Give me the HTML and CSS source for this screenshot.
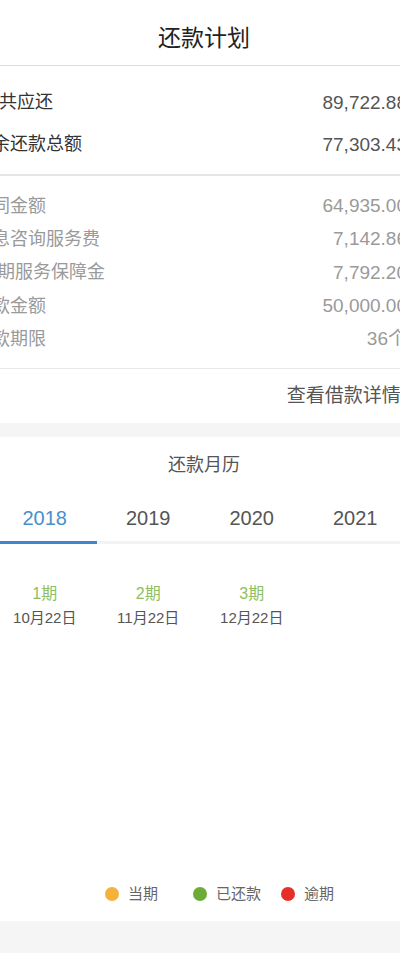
FILE: index.html
```html
<!DOCTYPE html>
<html lang="zh-CN">
<head>
    <meta charset="UTF-8">
    <meta name="viewport" content="width=device-width, initial-scale=1.0">
    <title>还款计划</title>
    <link rel="stylesheet" href="styles.css">
</head>
<body>
    <div class="page">
        <header class="nav">
            <h1>还款计划</h1>
        </header>

        <section class="summary">
            <div class="row shift"><span class="label">共应还</span><span class="value">89,722.88元</span></div>
            <div class="row"><span class="label">余还款总额</span><span class="value">77,303.43元</span></div>
        </section>

        <section class="detail">
            <div class="row"><span class="label">同金额</span><span class="value">64,935.00元</span></div>
            <div class="row"><span class="label">息咨询服务费</span><span class="value">7,142.86元</span></div>
            <div class="row shift-small"><span class="label">期服务保障金</span><span class="value">7,792.20元</span></div>
            <div class="row"><span class="label">款金额</span><span class="value">50,000.00元</span></div>
            <div class="row"><span class="label">款期限</span><span class="value">36个月</span></div>
        </section>

        <a class="more" href="#">查看借款详情<span class="arrow">&rsaquo;</span></a>

        <div class="gap"></div>

        <section class="calendar">
            <h2>还款月历</h2>
            <div class="tabs">
                <div class="tab active">2018</div>
                <div class="tab">2019</div>
                <div class="tab">2020</div>
                <div class="tab">2021</div>
            </div>
            <div class="periods">
                <div class="period"><span class="num">1期</span><span class="date">10月22日</span></div>
                <div class="period"><span class="num">2期</span><span class="date">11月22日</span></div>
                <div class="period"><span class="num">3期</span><span class="date">12月22日</span></div>
            </div>
            <div class="legend">
                <div class="legend-item"><span class="dot current"></span>当期</div>
                <div class="legend-item"><span class="dot paid"></span>已还款</div>
                <div class="legend-item"><span class="dot overdue"></span>逾期</div>
            </div>
        </section>

        <div class="gap bottom"></div>
    </div>
</body>
</html>
```

FILE: styles.css
```css
body {
    margin: 0;
    overflow: hidden;
    background-color: white;
    font-family: "Liberation Sans", "Noto Sans CJK SC", sans-serif;
}
.page {
    width: 444px;
    margin-left: -18px;
}
.nav {
    padding: 23px 0 12px;
    border-bottom: 1px solid #dcdcdc;
    text-align: center;
}
h1 {
    margin: 0;
    font-size: 23px;
    line-height: 30px;
    font-weight: normal;
    color: #222;
}
.row {
    display: flex;
    justify-content: space-between;
    align-items: center;
    padding-left: 10px;
}
.row.shift {
    padding-left: 17px;
}
.row.shift-small {
    padding-left: 15px;
}
.label {
    font-size: 18px;
    white-space: nowrap;
}
.value {
    font-size: 19px;
    white-space: nowrap;
}
.summary {
    padding: 13px 0 11px;
    border-bottom: 2px solid #e6e6e6;
}
.summary .row {
    height: 42px;
}
.summary .label {
    color: #333;
}
.summary .value {
    color: #555;
}
.detail {
    padding: 11px 0 15px;
    border-bottom: 1px solid #e8e8e8;
}
.detail .row {
    height: 33.3px;
}
.detail .label,
.detail .value {
    color: #9a9a9a;
}
.more {
    display: block;
    height: 54px;
    line-height: 54px;
    text-align: right;
    font-size: 19px;
    color: #555;
    text-decoration: none;
}
.arrow {
    margin-left: 19px;
    color: #aaa;
}
.gap {
    height: 14px;
    background-color: #f5f5f5;
}
.gap.bottom {
    height: 40px;
}
.calendar {
    height: 484px;
    display: flex;
    flex-direction: column;
    padding-top: 16px;
    padding-bottom: 17px;
    box-sizing: border-box;
}
h2 {
    margin: 0;
    text-align: center;
    font-size: 18px;
    line-height: 24px;
    font-weight: normal;
    color: #555;
}
.tabs,
.periods {
    display: grid;
    grid-template-columns: repeat(4, 103.5px);
    margin-left: 11px;
}
.tabs {
    margin-top: 17px;
}
.tab {
    padding: 12px 0 11px;
    line-height: 24px;
    font-size: 20px;
    text-align: center;
    color: #555;
    border-bottom: 3px solid #f3f3f3;
}
.tab.active {
    color: #4a8fca;
    border-bottom-color: #3e85cf;
}
.periods {
    margin-top: 40px;
}
.period {
    display: flex;
    flex-direction: column;
    align-items: center;
    gap: 4px;
}
.num {
    font-size: 16px;
    line-height: 20px;
    color: #8dbf62;
}
.date {
    font-size: 15px;
    line-height: 20px;
    color: #555;
}
.legend {
    margin-top: auto;
    display: flex;
    padding-left: 123px;
}
.legend-item {
    width: 88px;
    display: flex;
    align-items: center;
    gap: 9px;
    font-size: 15px;
    line-height: 20px;
    color: #666;
}
.dot {
    width: 14px;
    height: 14px;
    border-radius: 50%;
}
.dot.current {
    background-color: #f4b23a;
}
.dot.paid {
    background-color: #6cab37;
}
.dot.overdue {
    background-color: #e5302a;
}
```
